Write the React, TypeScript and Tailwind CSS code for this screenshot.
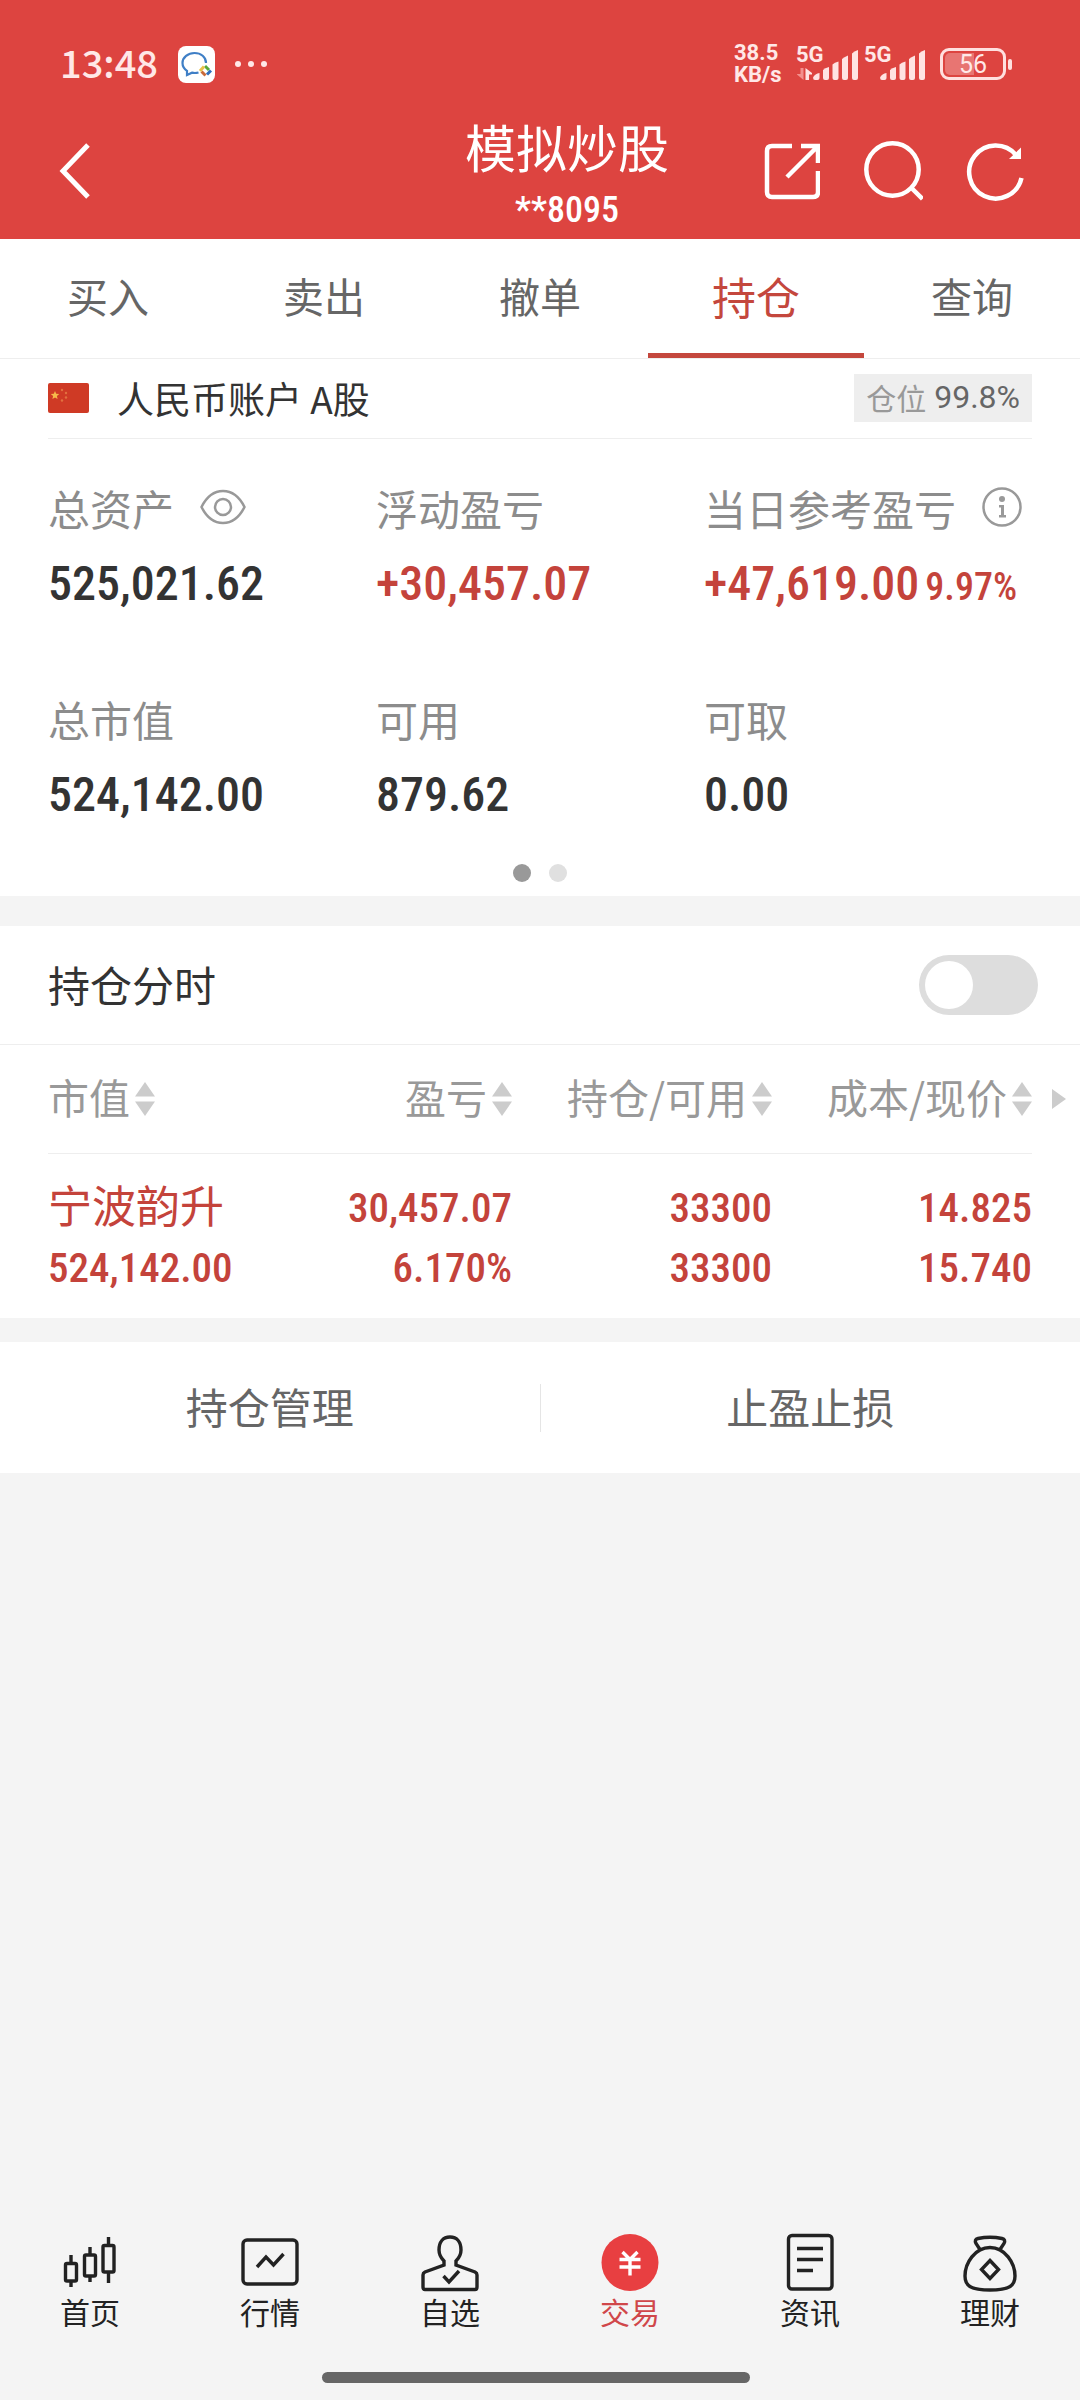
import { useState, type ReactNode } from 'react';
import clsx from 'clsx';

interface Asset {
  label: string;
  value: string;
  extra?: string;
  icon?: ReactNode;
  up?: boolean;
}

interface Position {
  name: string;
  marketValue: string;
  profit: string;
  profitRate: string;
  held: string;
  available: string;
  cost: string;
  price: string;
}

const tabs = ['买入', '卖出', '撤单', '持仓', '查询'];

const assets: Asset[] = [
  { label: '总资产', value: '525,021.62', icon: <EyeIcon /> },
  { label: '浮动盈亏', value: '+30,457.07', up: true },
  { label: '当日参考盈亏', value: '+47,619.00', extra: '9.97%', icon: <InfoIcon />, up: true },
  { label: '总市值', value: '524,142.00' },
  { label: '可用', value: '879.62' },
  { label: '可取', value: '0.00' },
];

const columns = ['市值', '盈亏', '持仓/可用', '成本/现价'];

const positions: Position[] = [
  {
    name: '宁波韵升',
    marketValue: '524,142.00',
    profit: '30,457.07',
    profitRate: '6.170%',
    held: '33300',
    available: '33300',
    cost: '14.825',
    price: '15.740',
  },
];

const navItems = [
  { label: '首页', icon: <CandlesIcon /> },
  { label: '行情', icon: <QuoteIcon /> },
  { label: '自选', icon: <PersonIcon /> },
  { label: '交易', icon: <TradeIcon /> },
  { label: '资讯', icon: <NewsIcon /> },
  { label: '理财', icon: <MoneyBagIcon /> },
];

function EyeIcon() {
  return (
    <svg width="46" height="36" viewBox="0 0 46 36" fill="none" stroke="#999" strokeWidth="2.5">
      <path d="M1.5 18C7 7 14 2 23 2s16 5 21.500 16C39 29 32 34 23 34S7 29 1.500 18z" />
      <circle cx="23" cy="18" r="8" />
    </svg>
  );
}

function InfoIcon() {
  return (
    <svg width="40" height="40" viewBox="0 0 40 40" fill="none">
      <circle cx="20" cy="20" r="18.500" stroke="#999" strokeWidth="2.500" />
      <circle cx="20" cy="12" r="3" fill="#999" />
      <path d="M17 18h5v10h2v2.500h-7V28h2v-7.500h-2z" fill="#999" />
    </svg>
  );
}

function WorkChatIcon() {
  return (
    <svg width="37" height="37" viewBox="0 0 37 37" fill="none">
      <rect width="37" height="37" rx="8" fill="#fff" />
      <path
        d="M28 17C28 11 23 7 16.500 7S4.500 11.500 4.500 17c0 3.500 1.800 6 4.500 7.800V29l5-2.300c2 .4 4.500.4 6.500-.2"
        stroke="#3f7fc6"
        strokeWidth="2.200"
      />
      <path d="M27 20l4 4" stroke="#58a83c" strokeWidth="3" />
      <path d="M33 24.500l-4 4" stroke="#2f6fbd" strokeWidth="3" />
      <path d="M27.500 29.500l-4-4" stroke="#c96a3a" strokeWidth="3" />
      <path d="M22 25l4-4.500" stroke="#e8c04a" strokeWidth="3" />
    </svg>
  );
}

function SignalBars() {
  return (
    <svg width="46" height="30" viewBox="0 0 46 30" fill="#ffe3e2">
      <path d="M0 27.500q2-4 6.500-4.500v5q0 2-2 2H2q-2 0-2-2.500z" />
      <path d="M10 20q2-2 6-3v11q0 2-2 2h-2q-2 0-2-2z" />
      <path d="M19.500 14.500q2-2 6-3V28q0 2-2 2h-2q-2 0-2-2z" />
      <path d="M29 9q2-2 6-3.500V28q0 2-2 2h-2q-2 0-2-2z" />
      <path d="M39 3.500q2-2.500 6-3.500v28q0 2-2 2h-2q-2 0-2-2z" />
    </svg>
  );
}

function DataArrows() {
  return (
    <svg width="16" height="12" viewBox="0 0 16 12">
      <path d="M6.500 0v12L0 6.500V6h3.500V0z" fill="#f3908d" />
      <path d="M8.500 12V0L15 5v1.500h-3V12z" fill="#ffe3e2" />
    </svg>
  );
}

function SortIcon() {
  return (
    <svg width="20" height="34" viewBox="0 0 20 34" fill="#ccc">
      <path d="M10 0l10 14.500H0z" />
      <path d="M0 19.500h20L10 34z" />
    </svg>
  );
}

function CandlesIcon() {
  return (
    <svg width="60" height="60" viewBox="0 0 60 60" fill="none" stroke="#222" strokeWidth="3.400">
      <rect x="5.500" y="30.500" width="11" height="17.500" rx="1.500" />
      <path d="M11 22v8M11 49v5" />
      <rect x="24.500" y="22" width="11" height="21" rx="1.500" />
      <path d="M30 14v8M30 44v5" />
      <rect x="43" y="12.500" width="11" height="26.500" rx="1.500" />
      <path d="M48.500 4v8M48.500 40v10" />
    </svg>
  );
}

function QuoteIcon() {
  return (
    <svg width="60" height="60" viewBox="0 0 60 60" fill="none" stroke="#222" strokeWidth="3.400">
      <rect x="3" y="7" width="54" height="44" rx="4" />
      <path d="M17 34l9-10 7.500 8L43.500 21" />
    </svg>
  );
}

function PersonIcon() {
  return (
    <svg width="60" height="60" viewBox="0 0 60 60" fill="none" stroke="#222" strokeWidth="3.400">
      <path d="M24 32v-4c-3-3-5-6-5-11C19 9 23 4 30 4s11 5 11 13c0 5-2 8-5 11v4l19 7q2 1 2 3v12q0 2.500-2 2.500H5q-2 0-2-2.500V42q0-2 2-3z" />
      <path d="M23.500 43l5.500 6 10-11" />
    </svg>
  );
}

function TradeIcon() {
  return (
    <svg width="60" height="60" viewBox="0 0 60 60" fill="none">
      <circle cx="30" cy="29.500" r="28.500" fill="#e83f41" />
      <path d="M22.500 19l7.500 7.500 7.500-7.500M19.500 26.500h21M19.500 34h21M30 25.500v17" stroke="#fff" strokeWidth="3.400" />
    </svg>
  );
}

function NewsIcon() {
  return (
    <svg width="60" height="60" viewBox="0 0 60 60" fill="none" stroke="#222" strokeWidth="3.400">
      <rect x="8.500" y="2.500" width="43.500" height="53.500" rx="3.500" />
      <path d="M17 15.500h26M17 26.500h26M17 37.500h16" />
    </svg>
  );
}

function MoneyBagIcon() {
  return (
    <svg width="60" height="60" viewBox="0 0 60 60" fill="none" stroke="#222" strokeWidth="3.400">
      <path d="M20 16.500l-4-6q-2-4 2-5 12-2.500 24 0 4 1 2 5l-4 6" />
      <path d="M30 14.500C15 14.500 5 30 5 43c0 10 6 14 25 14s25-4 25-14C55 30 45 14.500 30 14.500z" />
      <path d="M30 27.500l8.500 9L30 45.500l-8.500-9z" />
    </svg>
  );
}

function StatusBar() {
  return (
    <div className="flex h-32 items-center justify-between pl-[60px] pr-[68px] text-[#ffe8e7]">
      <div className="flex items-center gap-5">
        <span className="pb-1 text-[38px] leading-none font-medium">13:48</span>
        <WorkChatIcon />
        <span className="flex gap-[7px]">
          <i className="size-[6px] rounded-full bg-[#ffe8e7]" />
          <i className="size-[6px] rounded-full bg-[#ffe8e7]" />
          <i className="size-[6px] rounded-full bg-[#ffe8e7]" />
        </span>
      </div>
      <div className='flex items-center font-["Roboto",sans-serif]'>
        <div className="mr-3 w-[50px] text-[22px] leading-[22px] font-bold whitespace-nowrap">
          <p>38.5</p>
          <p>KB/s</p>
        </div>
        <div className="relative flex h-10 w-[68px] items-end justify-end pb-1 pr-[5px]">
          <span className="absolute top-0 left-0 text-[22px] leading-[22px] font-bold">5G</span>
          <DataArrows />
          <SignalBars />
        </div>
        <div className="relative flex h-10 w-[76px] items-end justify-end pb-1 pr-[14px]">
          <span className="absolute top-0 left-0 text-[22px] leading-[22px] font-bold">5G</span>
          <SignalBars />
        </div>
        <div className="relative flex h-8 w-[66px] items-center justify-center rounded-[9px] border-3 border-[#ffe0df]">
          <span className="absolute inset-y-[2px] left-[2px] w-[29px] rounded-l-[5px] bg-[#e87572]" />
          <span className="relative text-[25px] leading-none">56</span>
        </div>
        <span className="ml-[2px] h-[11px] w-[4px] rounded-sm bg-[#ffe0df]" />
      </div>
    </div>
  );
}

function Header() {
  return (
    <header className="bg-[#dd4440] text-white">
      <StatusBar />
      <div className="grid h-[111px] grid-cols-[1fr_auto_1fr] items-start">
        <button type="button" aria-label="返回" className="ml-14 h-[86px] w-10">
          <svg width="36" height="60" viewBox="0 0 36 60" fill="none" stroke="#fff" strokeWidth="5">
            <path d="M32 4L7 30l25 26" />
          </svg>
        </button>
        <div className="pl-[54px] text-center">
          <h1 className="-mt-3 text-[51px] leading-[60px]">模拟炒股</h1>
          <p className='mt-[13px] font-["Roboto_Condensed",Roboto,"Noto_Sans_CJK_SC",sans-serif] text-4xl leading-[42px] font-medium'>
            **8095
          </p>
        </div>
        <div className="flex h-[86px] items-center justify-end gap-[43px] pr-14">
          <button type="button" aria-label="分享">
            <svg width="58" height="60" viewBox="0 0 58 60" fill="none" stroke="#fff" strokeWidth="4.500">
              <path d="M30 5H10q-5 0-5 5v41q0 5 5 5h41q5 0 5-5V30" />
              <path d="M39 5h17v17M55.500 5.500L25 36" />
            </svg>
          </button>
          <button type="button" aria-label="搜索">
            <svg width="60" height="60" viewBox="0 0 60 60" fill="none" stroke="#fff" strokeWidth="4.500">
              <circle cx="29.500" cy="28.500" r="26.200" />
              <path d="M48 46.500L59.500 58" />
            </svg>
          </button>
          <button type="button" aria-label="刷新">
            <svg width="58" height="60" viewBox="0 0 58 60" fill="none" stroke="#fff" strokeWidth="4.500">
              <path d="M55.500 37A26.500 26.500 0 1 1 50 14" />
              <path d="M55 6.500v11.500H43z" fill="#fff" stroke="none" />
            </svg>
          </button>
        </div>
      </div>
    </header>
  );
}

export default function App() {
  const [activeTab, setActiveTab] = useState('持仓');
  const [activeNav, setActiveNav] = useState('交易');
  const [showTimeline, setShowTimeline] = useState(false);

  return (
    <div className='flex min-h-screen flex-col bg-[#f4f4f4] font-["Noto_Sans_CJK_SC",sans-serif] text-[#333]'>
      <Header />

      <main className="flex-1">
        <nav className="flex h-[120px] border-b border-[#eee] bg-white">
          {tabs.map((tab) => (
            <button
              key={tab}
              type="button"
              onClick={() => setActiveTab(tab)}
              className={clsx(
                'flex-1 border-b-[5px]',
                tab === activeTab
                  ? 'border-[#c4473d] text-[44px] text-[#c4473d]'
                  : 'border-transparent text-[41px] text-[#666]'
              )}
            >
              {tab}
            </button>
          ))}
        </nav>

        {/* Account summary */}
        <section className="bg-white px-12">
          <div className="flex h-20 items-center border-b border-[#eee] pb-[2px]">
            <svg width="41" height="30" viewBox="0 0 41 30" className="mr-7">
              <rect width="41" height="30" rx="2" fill="#cf3a25" />
              <path d="M7 8l1.200 2.800 3 .2-2.300 2 .7 3L7 14.400 4.400 16l.7-3-2.300-2 3-.2z" fill="#f6b94a" />
              <g fill="#e2703f">
                <circle cx="14" cy="7" r="1.200" />
                <circle cx="18" cy="10" r="1.200" />
                <circle cx="18" cy="14.500" r="1.200" />
                <circle cx="14" cy="17.500" r="1.200" />
              </g>
            </svg>
            <h2 className="flex-1 text-[37px] leading-[60px]">人民币账户 A股</h2>
            <span className="flex h-12 items-center gap-2 bg-[#eee] px-3 pb-[2px] text-[30px] leading-none">
              <span className="text-[#999]">仓位</span>
              <span className='font-["Roboto",sans-serif] text-[32px] text-[#666]'>99.8%</span>
            </span>
          </div>

          <dl className="grid grid-cols-3 gap-y-[74px] pt-10">
            {assets.map((asset) => (
              <div key={asset.label} className="whitespace-nowrap">
                <dt className="flex h-14 items-center gap-[26px] text-[42px] text-[#8c8c8c]">
                  {asset.label}
                  {asset.icon}
                </dt>
                <dd
                  className={clsx(
                    'mt-[17px] flex h-16 items-baseline font-["Roboto_Condensed",Roboto,"Noto_Sans_CJK_SC",sans-serif] text-5xl leading-16 font-medium',
                    asset.up && 'text-[#c4433b]'
                  )}
                >
                  {asset.value}
                  {asset.extra && <span className="ml-[6px] text-[38px] leading-none">{asset.extra}</span>}
                </dd>
              </div>
            ))}
          </dl>

          <div className="flex justify-center gap-[18px] pt-[37px] pb-[14px]">
            <span className="size-[18px] rounded-full bg-[#999]" />
            <span className="size-[18px] rounded-full bg-[#e0e0e0]" />
          </div>
        </section>

        {/* Positions */}
        <section className="mt-[30px] bg-white">
          <div className="flex h-[119px] items-center justify-between border-b border-[#eee] pr-[42px] pl-12">
            <label htmlFor="timeline" className="pb-1 text-[42px]">
              持仓分时
            </label>
            <input
              id="timeline"
              type="checkbox"
              role="switch"
              checked={showTimeline}
              onChange={(e) => setShowTimeline(e.target.checked)}
              className="h-[60px] w-[119px] appearance-none rounded-full bg-[#ddd] p-[6px] before:block before:size-12 before:rounded-full before:bg-white checked:bg-[#c4473d] checked:before:ml-auto"
            />
          </div>

          <div className="relative px-12">
            <table className="w-full table-fixed">
              <thead>
                <tr className="h-[108px] border-b border-[#eee]">
                  {columns.map((column) => (
                    <th
                      key={column}
                      className="p-0 text-right font-normal first:w-[204px] first:text-left"
                    >
                      <button
                        type="button"
                        className="inline-flex items-center gap-[5px] text-[41px] whitespace-nowrap text-[#999]"
                      >
                        <span className="pb-1">{column}</span>
                        <SortIcon />
                      </button>
                    </th>
                  ))}
                </tr>
              </thead>
              <tbody className='font-["Roboto_Condensed",Roboto,"Noto_Sans_CJK_SC",sans-serif] text-[41px] leading-[60px] font-medium text-[#c4433b]'>
                {positions.map((position) => (
                  <tr key={position.name} className="h-[165px] text-right align-top">
                    <td className="p-0 pt-5 text-left whitespace-nowrap">
                      <p className='pb-1 font-["Noto_Sans_CJK_SC",sans-serif] text-[44px] font-normal'>{position.name}</p>
                      <p>{position.marketValue}</p>
                    </td>
                    <td className="p-0 pt-6">
                      <p>{position.profit}</p>
                      <p>{position.profitRate}</p>
                    </td>
                    <td className="p-0 pt-6">
                      <p>{position.held}</p>
                      <p>{position.available}</p>
                    </td>
                    <td className="p-0 pt-6">
                      <p>{position.cost}</p>
                      <p>{position.price}</p>
                    </td>
                  </tr>
                ))}
              </tbody>
            </table>
            <svg width="14" height="20" viewBox="0 0 14 20" fill="#ccc" className="absolute top-11 right-[14px]">
              <path d="M0 0l14 10L0 20z" />
            </svg>
          </div>
        </section>

        <section className="mt-6 flex h-[131px] items-center bg-white text-[42px] text-[#666]">
          <button type="button" className="flex-1 pb-1">
            持仓管理
          </button>
          <span className="h-12 w-px bg-[#e5e5e5]" />
          <button type="button" className="flex-1 pb-1">
            止盈止损
          </button>
        </section>
      </main>

      <footer>
        <nav className="flex">
          {navItems.map((item) => (
            <button
              key={item.label}
              type="button"
              onClick={() => setActiveNav(item.label)}
              className={clsx(
                'flex flex-1 flex-col items-center text-[30px] leading-9',
                item.label === activeNav ? 'text-[#d0474a]' : 'text-[#222]'
              )}
            >
              {item.icon}
              {item.label}
            </button>
          ))}
        </nav>
        <div className="flex justify-center pt-[43px] pr-2 pb-[17px]">
          <div className="h-[11px] w-[428px] rounded-full bg-[#666]" />
        </div>
      </footer>
    </div>
  );
}
